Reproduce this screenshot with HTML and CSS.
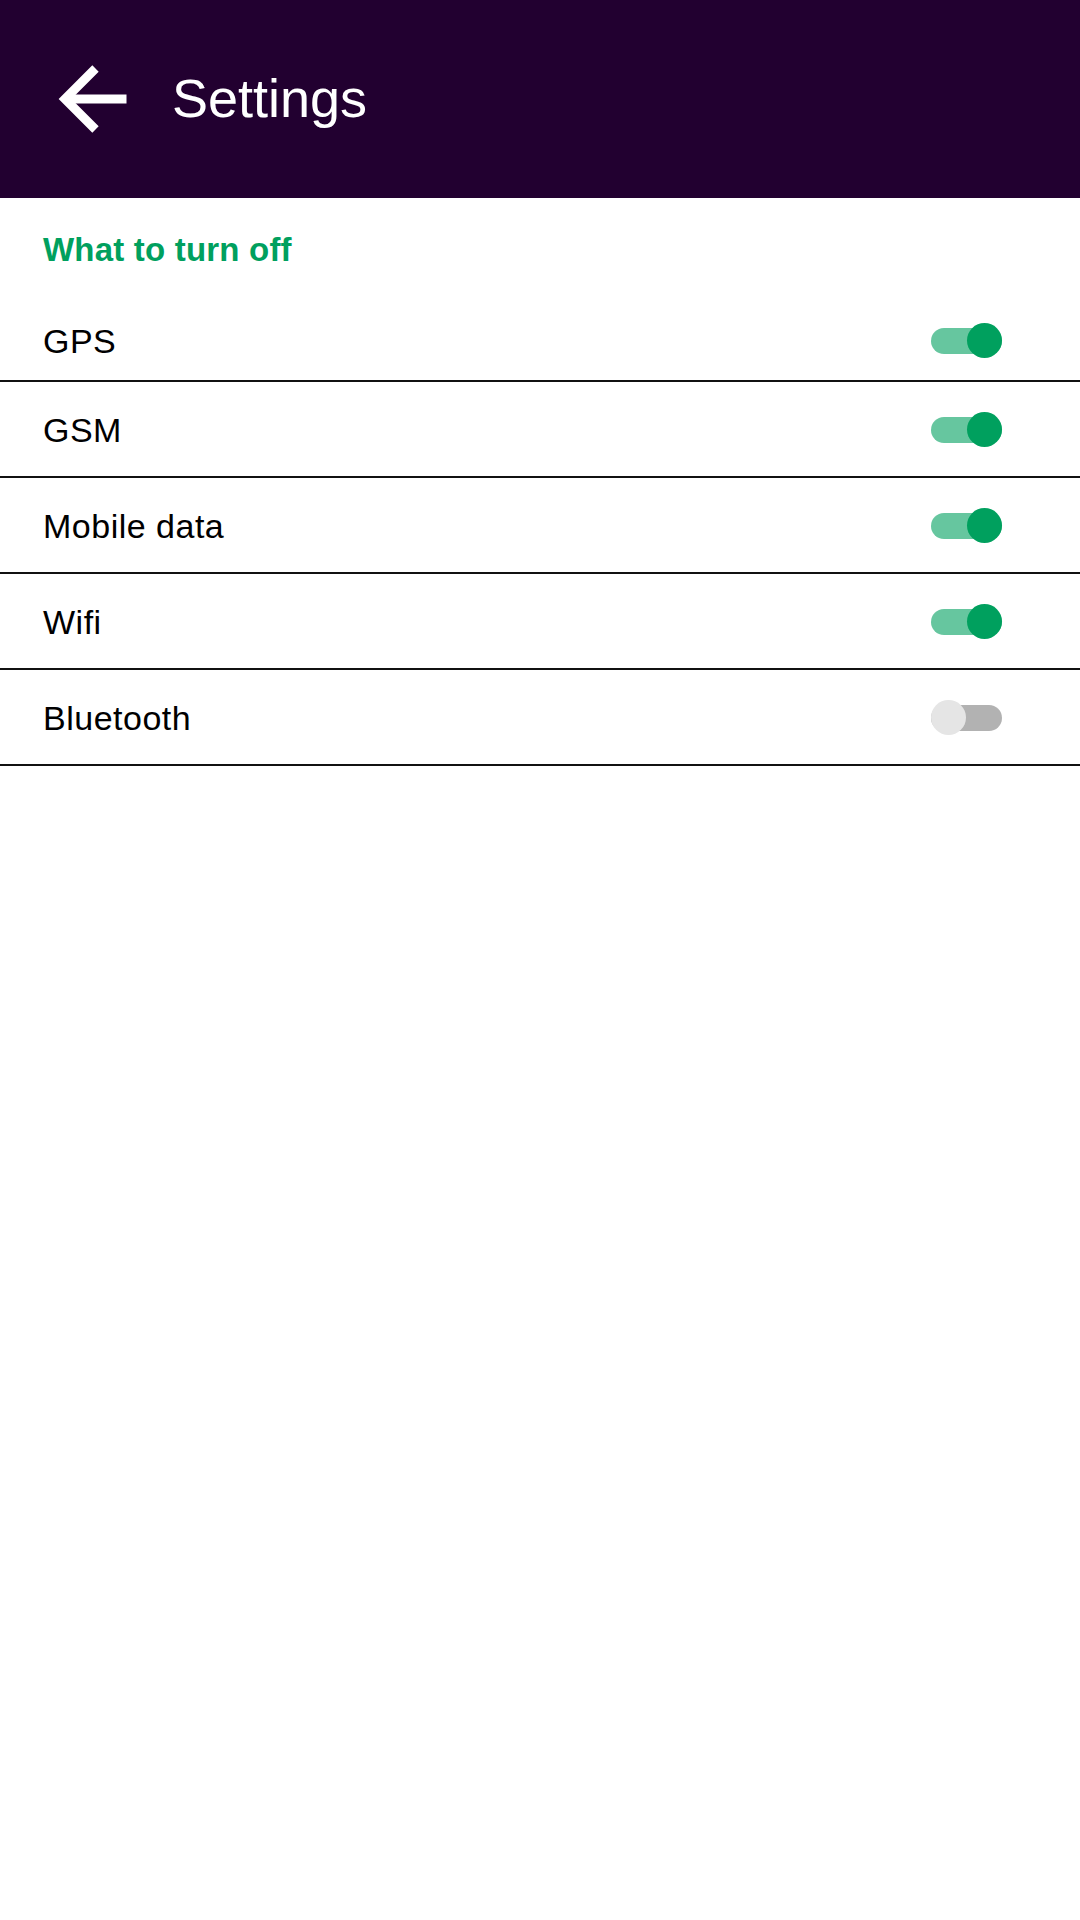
FILE: index.html
```html
<!DOCTYPE html>
<html lang="en">
<head>
<meta charset="utf-8">
<title>Settings</title>
<link rel="stylesheet" href="styles.css">
</head>
<body>
<header class="appbar">
  <svg class="back" width="72" height="72" viewBox="0 0 72 72" aria-hidden="true">
    <polyline points="40.5,5.5 10,36 40.5,66.5" fill="none" stroke="#fff" stroke-width="9" stroke-linejoin="miter" stroke-linecap="butt"/>
    <line x1="12" y1="36" x2="71.5" y2="36" stroke="#fff" stroke-width="9"/>
  </svg>
  <h1 class="appbar-title">Settings</h1>
</header>
<main class="content">
  <h2 class="section-title">What to turn off</h2>
  <ul class="list">
    <li class="row row-first"><span class="label">GPS</span><span class="switch on"><span class="thumb"></span></span></li>
    <li class="row"><span class="label">GSM</span><span class="switch on"><span class="thumb"></span></span></li>
    <li class="row"><span class="label">Mobile data</span><span class="switch on"><span class="thumb"></span></span></li>
    <li class="row"><span class="label">Wifi</span><span class="switch on"><span class="thumb"></span></span></li>
    <li class="row"><span class="label">Bluetooth</span><span class="switch off"><span class="thumb"></span></span></li>
  </ul>
</main>
</body>
</html>
```
FILE: styles.css
```css
html, body {
  margin: 0;
  padding: 0;
  background: #ffffff;
}
body {
  width: 1080px;
  min-height: 1920px;
  font-family: "Liberation Sans", Arial, sans-serif;
  color: #000;
}
.appbar {
  height: 198px;
  background: #220030;
  display: flex;
  align-items: center;
  padding-left: 55px;
  box-sizing: border-box;
}
.back {
  display: block;
  flex-shrink: 0;
}
.appbar-title {
  margin: 0 0 2px 45px;
  font-size: 54px;
  font-weight: 400;
  color: #ffffff;
  line-height: 1;
}
.content {
  display: flex;
  flex-direction: column;
}
.section-title {
  margin: 32px 0 16px 0;
  padding-left: 43px;
  font-size: 33px;
  line-height: 40px;
  font-weight: 700;
  letter-spacing: 0.2px;
  color: #00a05e;
}
.list {
  list-style: none;
  margin: 0;
  padding: 0;
}
.row {
  height: 96px;
  box-sizing: border-box;
  border-bottom: 2px solid #111111;
  display: flex;
  align-items: center;
  justify-content: space-between;
  padding: 1px 78px 0 43px;
}
.row-first {
  padding-top: 15px;
}
.label {
  font-size: 34px;
  line-height: 40px;
  letter-spacing: 0.5px;
}
.switch {
  width: 71px;
  height: 26px;
  border-radius: 13px;
  display: flex;
  align-items: center;
}
.thumb {
  width: 35px;
  height: 35px;
  border-radius: 50%;
  flex-shrink: 0;
}
.switch.on {
  background: #66c69f;
  justify-content: flex-end;
}
.switch.on .thumb {
  background: #00a05e;
}
.switch.off {
  background: #b2b2b2;
  justify-content: flex-start;
}
.switch.off .thumb {
  background: #e5e5e5;
}
```
